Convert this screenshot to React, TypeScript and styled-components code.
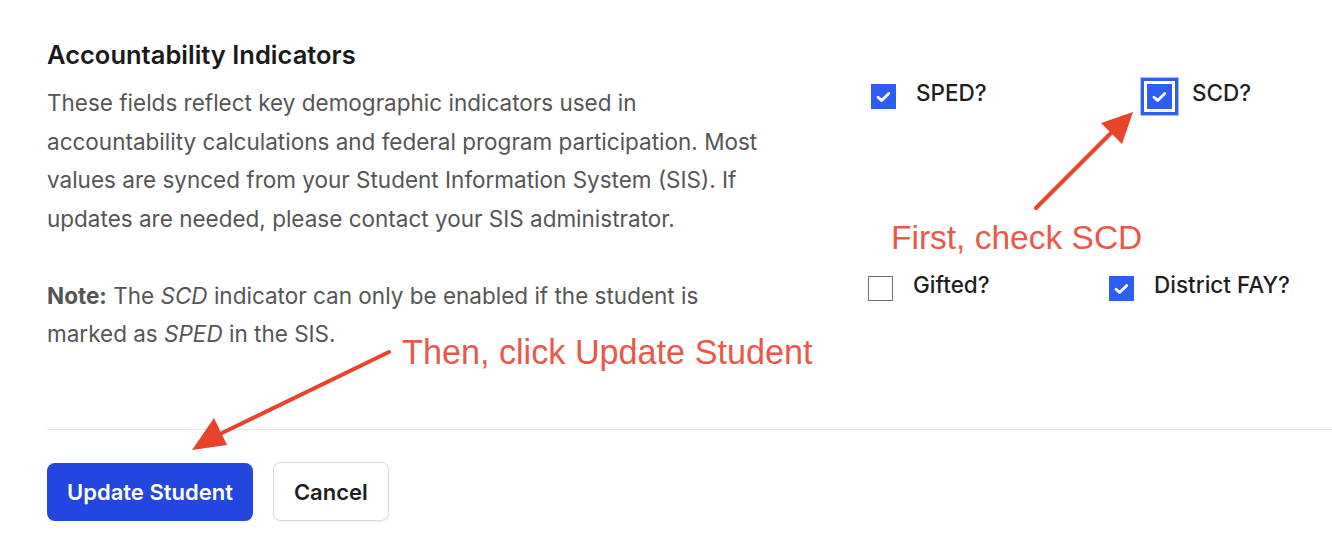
import styled, { createGlobalStyle } from 'styled-components';

const GlobalStyle = createGlobalStyle`
  html, body {
    margin: 0;
    padding: 0;
    background: #ffffff;
  }
  body {
    font-family: Inter, "Noto Sans", "Liberation Sans", sans-serif;
    color: #1f1f1f;
  }
`;

const checks = [
  [
    { label: 'SPED?', checked: true, width: 276 },
    { label: 'SCD?', checked: true, focused: true, width: 160 },
  ],
  [
    { label: 'Gifted?', checked: false, width: 241 },
    { label: 'District FAY?', checked: true, width: 200 },
  ],
];

const CheckMark = () => (
  <svg width="15" height="12" viewBox="0 0 15 12" fill="none">
    <path d="M2 6.2 L5.6 9.4 L12.8 2.4" stroke="#fff" strokeWidth="2.8" strokeLinecap="round" strokeLinejoin="round" />
  </svg>
);

const App = () => {
  return (
    <Page>
      <GlobalStyle />
      <Section>
        <Info>
          <Title>Accountability Indicators</Title>
          <Text>
            These fields reflect key demographic indicators used in accountability calculations and
            federal program participation. Most values are synced from your Student Information System
            (SIS). If updates are needed, please contact your SIS administrator.
          </Text>
          <Note>
            <strong>Note:</strong> The <em>SCD</em> indicator can only be enabled if the student is
            marked as <em>SPED</em> in the SIS.
          </Note>
        </Info>
        <Checks>
          {checks.map((row, i) => (
            <CheckRow key={i} $offset={i === 0 ? 3 : 0}>
              {row.map((c) => (
                <CheckItem key={c.label} $width={c.width}>
                  <Box $checked={c.checked} $focused={!!c.focused}>
                    {c.checked && <CheckMark />}
                  </Box>
                  <CheckLabel>{c.label}</CheckLabel>
                </CheckItem>
              ))}
            </CheckRow>
          ))}
        </Checks>
      </Section>

      <Divider />

      <Actions>
        <PrimaryButton>Update Student</PrimaryButton>
        <SecondaryButton>Cancel</SecondaryButton>
      </Actions>

      <Annotation $left={891} $top={219} $size={33.5}>First, check SCD</Annotation>
      <Annotation $left={402} $top={333} $size={34.2}>Then, click Update Student</Annotation>

      <ArrowLayer width="1332" height="556" viewBox="0 0 1332 556">
        <line x1="1036" y1="208" x2="1114" y2="130" stroke="#e8432b" strokeWidth="4" strokeLinecap="round" />
        <polygon points="1133,112 1122,144 1101,123" fill="#e8432b" />
        <line x1="389" y1="352" x2="222" y2="433" stroke="#e8432b" strokeWidth="4" strokeLinecap="round" />
        <polygon points="192,450 214,418 227,445" fill="#e8432b" />
      </ArrowLayer>
    </Page>
  );
};

const Page = styled.div`
  position: relative;
  width: 1332px;
  height: 556px;
  overflow: hidden;
`;

const Section = styled.section`
  display: flex;
  padding: 38px 0 0 47px;
  height: 429px;
  box-sizing: border-box;
`;

const Info = styled.div`
  width: 716px;
`;

const Title = styled.h2`
  margin: 0 0 12px;
  font-size: 25.5px;
  line-height: 34px;
  font-weight: 600;
  color: #1a1a1a;
`;

const Text = styled.p`
  margin: 0;
  font-size: 22.5px;
  line-height: 38.5px;
  color: #555555;
`;

const Note = styled(Text)`
  margin-top: 39px;
  line-height: 37.5px;

  strong {
    font-weight: 700;
  }
`;

const Checks = styled.div`
  display: flex;
  flex-direction: column;
  gap: 167px;
  margin-left: 105px;
  padding-top: 46px;
`;

const CheckRow = styled.div<{ $offset: number }>`
  display: flex;
  margin-left: ${({ $offset }) => $offset}px;
`;

const CheckItem = styled.label<{ $width: number }>`
  display: flex;
  align-items: flex-start;
  gap: 20px;
  width: ${({ $width }) => $width}px;
`;

const Box = styled.span<{ $checked: boolean; $focused: boolean }>`
  display: flex;
  align-items: center;
  justify-content: center;
  width: 25px;
  height: 25px;
  box-sizing: border-box;
  flex-shrink: 0;
  background: ${({ $checked }) => ($checked ? '#2d5ef1' : '#ffffff')};
  border: ${({ $checked }) => ($checked ? 'none' : '1.5px solid #6b7280')};
  box-shadow: ${({ $focused }) =>
    $focused ? '0 0 0 3px #ffffff, 0 0 0 6px #2d5ef1, 0 0 0 7px #a9bffa' : 'none'};
`;

const CheckLabel = styled.span`
  margin-top: -3px;
  font-size: 22.5px;
  line-height: 24px;
  font-weight: 500;
  color: #1f1f1f;
`;

const Divider = styled.hr`
  margin: 0 0 0 47px;
  border: none;
  border-top: 1px solid #e6e6e6;
`;

const Actions = styled.div`
  display: flex;
  gap: 20px;
  padding: 33px 0 0 47px;
`;

const PrimaryButton = styled.button`
  height: 58px;
  padding: 0 20px;
  border: none;
  border-radius: 8px;
  background: #2346de;
  color: #ffffff;
  font-family: inherit;
  font-size: 22px;
  font-weight: 600;
`;

const SecondaryButton = styled.button`
  height: 59px;
  margin-top: -1px;
  padding: 0 20px;
  border: 1px solid #d9d9d9;
  border-radius: 8px;
  background: #ffffff;
  color: #1f1f1f;
  font-family: inherit;
  font-size: 22px;
  font-weight: 600;
  box-shadow: 0 1px 2px rgba(0, 0, 0, 0.05);
`;

const Annotation = styled.div<{ $left: number; $top: number; $size: number }>`
  position: absolute;
  left: ${({ $left }) => $left}px;
  top: ${({ $top }) => $top}px;
  font-family: "Liberation Sans", Arial, sans-serif;
  font-size: ${({ $size }) => $size}px;
  line-height: 38px;
  color: #e9584a;
  white-space: nowrap;
`;

const ArrowLayer = styled.svg`
  position: absolute;
  left: 0;
  top: 0;
  pointer-events: none;
`;

export default App;
